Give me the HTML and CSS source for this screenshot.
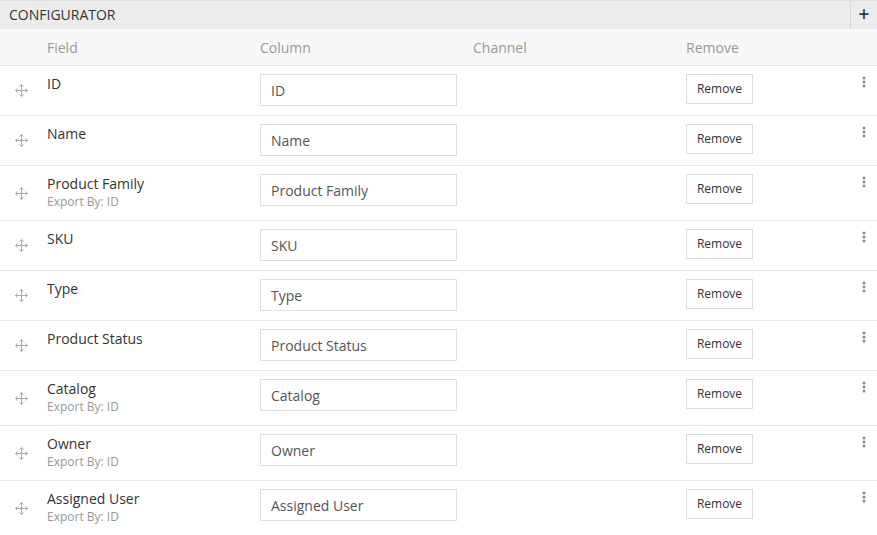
FILE: index.html
```html
<!DOCTYPE html>
<html>
<head>
<meta charset="utf-8">
<link rel="stylesheet" href="styles.css">
</head>
<body>
<div class="panel">
  <div class="panel-head">
    <span class="title">CONFIGURATOR</span>
    <span class="add">+</span>
  </div>
  <div class="row head-row">
    <div class="c-drag"></div>
    <div class="c-field">Field</div>
    <div class="c-col">Column</div>
    <div class="c-chan">Channel</div>
    <div class="c-rem">Remove</div>
    <div class="c-menu"></div>
  </div>
  <div id="rows"></div>
</div>
<script src="app.js"></script>
</body>
</html>
```

FILE: app.js
```js
var items = [
  ["ID", ""], ["Name", ""], ["Product Family", "Export By: ID"], ["SKU", ""],
  ["Type", ""], ["Product Status", ""], ["Catalog", "Export By: ID"],
  ["Owner", "Export By: ID"], ["Assigned User", "Export By: ID"]
];
var drag = '<svg width="13" height="13" viewBox="0 0 13 13" fill="none" stroke="#a9a9a9" stroke-width="1"><path d="M6.5 0.5v12M0.5 6.5h12"/><path d="M4.5 2.5l2-2 2 2M4.5 10.5l2 2 2-2M2.5 4.5l-2 2 2 2M10.5 4.5l2 2-2 2"/></svg>';
var dots = '<svg width="4" height="12" viewBox="0 0 4 12" fill="#8a8a8a"><circle cx="2" cy="2" r="1.5"/><circle cx="2" cy="6" r="1.5"/><circle cx="2" cy="10" r="1.5"/></svg>';
var html = "";
items.forEach(function (it) {
  html += '<div class="row">' +
    '<div class="c-drag">' + drag + '</div>' +
    '<div class="c-field"><div class="name">' + it[0] + '</div>' +
    (it[1] ? '<div class="sub">' + it[1] + '</div>' : '') + '</div>' +
    '<div class="c-col"><div class="input">' + it[0] + '</div></div>' +
    '<div class="c-chan"></div>' +
    '<div class="c-rem"><span class="btn">Remove</span></div>' +
    '<div class="c-menu">' + dots + '</div>' +
    '</div>';
});
document.getElementById("rows").innerHTML = html;
```

FILE: styles.css
```css
html, body {
  margin: 0;
  padding: 0;
  background: #fff;
  font-family: "Open Sans", sans-serif;
  color: #333;
}
.panel {
  width: 877px;
}
.panel-head {
  display: flex;
  align-items: stretch;
  height: 28px;
  background: #ececec;
  border-top: 1px solid #e0e0e0;
}
.title {
  flex: 1;
  padding-left: 9px;
  font-size: 14px;
  line-height: 28px;
  color: #333;
}
.add {
  width: 26px;
  border-left: 1px solid #d6d6d6;
  text-align: center;
  font-size: 19px;
  font-weight: 600;
  line-height: 26px;
  color: #333;
}
.row {
  display: flex;
  border-bottom: 1px solid #e6e6e6;
}
.head-row {
  background: #f8f8f8;
  height: 36px;
  align-items: center;
  font-size: 14px;
  color: #999;
}
.c-drag {
  width: 47px;
  flex: none;
  display: flex;
  justify-content: center;
  align-items: center;
  padding-right: 4px;
  box-sizing: border-box;
}
.c-field, .c-col, .c-chan {
  width: 213px;
  flex: none;
}
.c-rem {
  width: 164px;
  flex: none;
}
.c-menu {
  width: 27px;
  flex: none;
  display: flex;
  justify-content: center;
}
#rows .row > div {
  padding-top: 8px;
  padding-bottom: 9px;
}
#rows .row > .c-field {
  padding-bottom: 10px;
}
#rows .row > .c-drag {
  padding-top: 9px;
}
#rows .row > .c-menu {
  padding-top: 10px;
}
.name {
  font-size: 14px;
  line-height: 20px;
  color: #333;
}
.sub {
  font-size: 12px;
  line-height: 16px;
  color: #999;
}
.input {
  width: 197px;
  height: 32px;
  box-sizing: border-box;
  border: 1px solid #e0e0e0;
  padding-left: 10px;
  font-size: 14px;
  line-height: 31px;
  color: #555;
}
.btn {
  display: inline-block;
  width: 67px;
  height: 30px;
  box-sizing: border-box;
  border: 1px solid #dcdcdc;
  text-align: center;
  font-size: 12px;
  line-height: 28px;
  color: #333;
}
```
